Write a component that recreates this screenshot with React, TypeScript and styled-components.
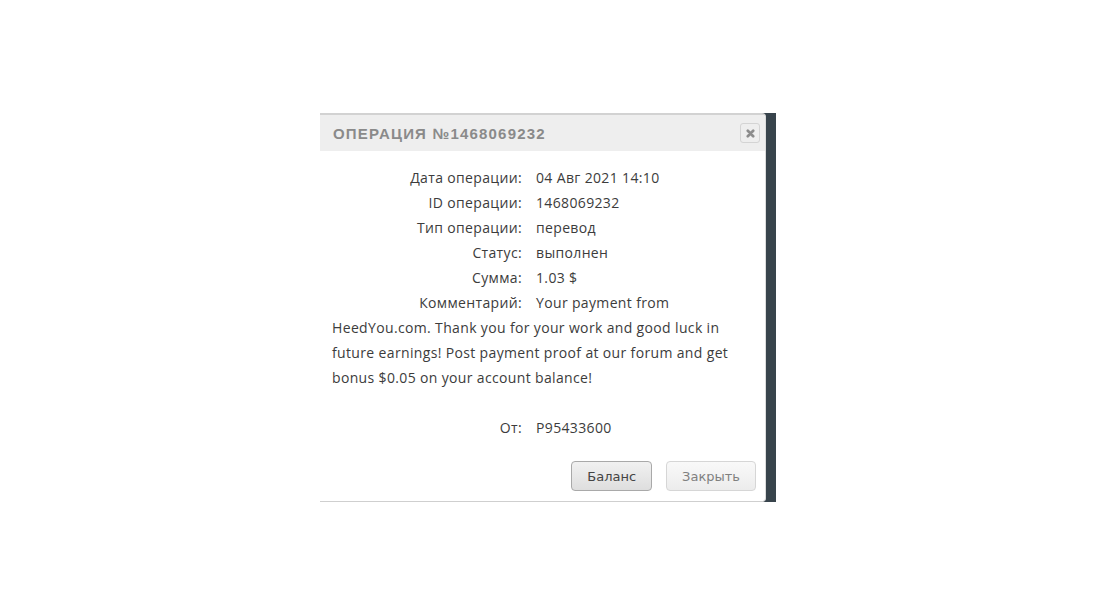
import React from 'react';
import styled, { createGlobalStyle } from 'styled-components';

const GlobalStyle = createGlobalStyle`
  html, body {
    margin: 0;
    padding: 0;
    background: #ffffff;
  }
`;

const Page = styled.div`
  padding: 113px 0 0 320px;
`;

const Frame = styled.div`
  display: flex;
  width: 456px;
  background: #38444c;
`;

const Dialog = styled.div`
  width: 445px;
  background: #ffffff;
  border-top: 2px solid #d2d2d2;
  border-right: 1px solid #dcdcdc;
  border-bottom: 1px solid #cfcfcf;
  border-radius: 0 4px 4px 0;
  display: flex;
  flex-direction: column;
`;

const Header = styled.div`
  display: flex;
  align-items: center;
  justify-content: space-between;
  height: 36px;
  padding: 0 5px 0 13px;
  background: #eeeeee;
  border-radius: 0 3px 0 0;
`;

const Title = styled.h3`
  margin: 0;
  font-family: 'Liberation Sans', Arial, sans-serif;
  font-size: 15px;
  font-weight: bold;
  letter-spacing: 1.2px;
  color: #8a8a8a;
`;

const CloseIcon = styled.button`
  display: flex;
  align-items: center;
  justify-content: center;
  width: 20px;
  height: 20px;
  padding: 0;
  border: 1px solid #d4d4d4;
  border-radius: 3px;
  background: #eeeeee;
  color: #8c8c8c;
  cursor: pointer;
`;

const Content = styled.div`
  padding: 14px 12px 0 12px;
  font-family: 'Open Sans', 'Noto Sans', sans-serif;
  font-size: 14px;
  letter-spacing: 0.35px;
  line-height: 25px;
  color: #3c3c3c;
`;

const Row = styled.div``;

const Label = styled.span`
  float: left;
  width: 190px;
  margin-right: 14px;
  text-align: right;
`;

const Spacer = styled.div`
  height: 25px;
`;

const Footer = styled.div`
  display: flex;
  justify-content: flex-end;
  gap: 14px;
  padding: 21px 9px 10px 0;
`;

const Button = styled.button<{ $primary?: boolean }>`
  height: 30px;
  padding: 0 15px;
  font-family: 'DejaVu Sans', Verdana, sans-serif;
  font-size: 13px;
  font-weight: 400;
  border-radius: 4px;
  cursor: pointer;
  color: ${(p) => (p.$primary ? '#444444' : '#808080')};
  border: 1px solid ${(p) => (p.$primary ? '#a9a9a9' : '#d6d6d6')};
  background: ${(p) =>
    p.$primary
      ? 'linear-gradient(#f1f1f1, #dedede)'
      : 'linear-gradient(#f9f9f9, #ececec)'};
`;

const rows = [
  ['Дата операции:', '04 Авг 2021 14:10'],
  ['ID операции:', '1468069232'],
  ['Тип операции:', 'перевод'],
  ['Статус:', 'выполнен'],
  ['Сумма:', '1.03 $'],
];

const App: React.FC = () => {
  return (
    <Page>
      <GlobalStyle />
      <Frame>
        <Dialog>
          <Header>
            <Title>ОПЕРАЦИЯ №1468069232</Title>
            <CloseIcon aria-label="close">
              <svg width="9" height="9" viewBox="0 0 10 10">
                <path d="M2 2 L8 8 M8 2 L2 8" stroke="currentColor" strokeWidth="3" strokeLinecap="round" />
              </svg>
            </CloseIcon>
          </Header>
          <Content>
            {rows.map(([label, value]) => (
              <Row key={label}>
                <Label>{label}</Label>
                {value}
              </Row>
            ))}
            <Row>
              <Label>Комментарий:</Label>
              Your payment from HeedYou.com. Thank you for your work and good luck in future
              earnings! Post payment proof at our forum and get bonus $0.05 on your account
              balance!
            </Row>
            <Spacer />
            <Row>
              <Label>От:</Label>
              P95433600
            </Row>
          </Content>
          <Footer>
            <Button $primary>Баланс</Button>
            <Button>Закрыть</Button>
          </Footer>
        </Dialog>
      </Frame>
    </Page>
  );
};

export default App;
